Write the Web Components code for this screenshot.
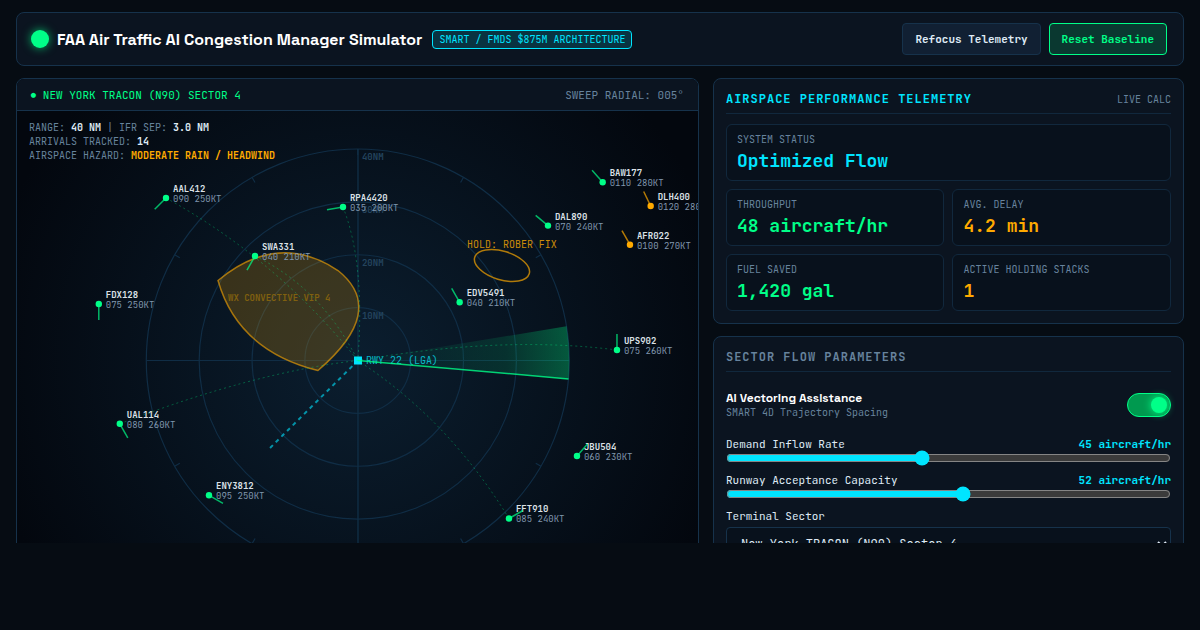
<!DOCTYPE html>
<html lang="en">
<head>
<meta charset="utf-8">
<meta name="viewport" content="width=device-width, initial-scale=1">
<title>FAA Air Traffic AI Congestion Manager Simulator</title>
<style>
  :root {
    --mono: "JetBrains Mono", "Liberation Mono", monospace;
    --sans: "Space Grotesk", Inter, sans-serif;
    --bg: #060c13;
    --panel: #0b1420;
    --inset: #08111c;
    --line: #16324b;
    --line-soft: #11283d;
    --text: #dfeaf5;
    --muted: #67839d;
    --green: #00ff88;
    --cyan: #00e5ff;
    --amber: #ffaa00;
  }
  body { margin: 0; background: var(--bg); color: var(--text); font-family: var(--mono); font-size: 11px; color-scheme: dark; }
</style>
</head>
<body>
<atc-app>
  <atc-header slot="header" heading="FAA Air Traffic AI Congestion Manager Simulator">
    <span slot="badge">SMART / FMDS $875M ARCHITECTURE</span>
    <atc-button slot="actions">Refocus Telemetry</atc-button>
    <atc-button slot="actions" tone="go">Reset Baseline</atc-button>
  </atc-header>
  <atc-scope slot="scope">
    <span slot="mark">●</span>
    <span slot="sector">NEW YORK TRACON (N90) SECTOR 4</span>
    <span slot="radial">SWEEP RADIAL: 005°</span>
  </atc-scope>
  <atc-panel slot="side" heading="AIRSPACE PERFORMANCE TELEMETRY" tone="cyan">
    <span slot="note">LIVE CALC</span>
    <atc-stats>
      <atc-stat label="SYSTEM STATUS" tone="cyan" wide>Optimized Flow</atc-stat>
      <atc-stat label="THROUGHPUT" tone="green">48 aircraft/hr</atc-stat>
      <atc-stat label="AVG. DELAY" tone="amber">4.2 min</atc-stat>
      <atc-stat label="FUEL SAVED" tone="green">1,420 gal</atc-stat>
      <atc-stat label="ACTIVE HOLDING STACKS" tone="amber">1</atc-stat>
    </atc-stats>
  </atc-panel>
  <atc-panel slot="side" heading="SECTOR FLOW PARAMETERS">
    <atc-toggle label="AI Vectoring Assistance" hint="SMART 4D Trajectory Spacing"></atc-toggle>
    <atc-slider label="Demand Inflow Rate" min="10" max="90" value="45" unit="aircraft/hr"></atc-slider>
    <atc-slider label="Runway Acceptance Capacity" min="20" max="80" value="52" unit="aircraft/hr"></atc-slider>
    <atc-select label="Terminal Sector" options="New York TRACON (N90) Sector 4"></atc-select>
  </atc-panel>
</atc-app>

<script>
const define = (name, render, setup) => customElements.define(name, class extends HTMLElement {
  connectedCallback() {
    if (this.shadowRoot) return;
    const root = this.attachShadow({ mode: "open" });
    root.innerHTML = "<style>*{box-sizing:border-box}:host{display:block;box-sizing:border-box}</style>" + render(this);
    if (setup) setup(this, root);
  }
});
const attr = (el, name) => el.getAttribute(name) || "";

define("atc-app", () => `
  <style>
    :host { display: flex; flex-direction: column; height: 100vh; }
    .view { flex: 1; min-height: 0; overflow: hidden; padding: 12px 16px 0; display: flex; flex-direction: column; gap: 12px; }
    .foot { flex: none; height: 87px; }
    main { display: grid; grid-template-columns: minmax(0, 1.45fr) minmax(0, 1fr); gap: 14px; align-items: start; }
    aside { display: flex; flex-direction: column; gap: 12px; }
  </style>
  <div class="view">
    <slot name="header"></slot>
    <main><slot name="scope"></slot><aside><slot name="side"></slot></aside></main>
  </div>
  <div class="foot"></div>`);

define("atc-header", el => `
  <style>
    :host { flex: none; }
    header { display: flex; align-items: center; justify-content: space-between; height: 54px; padding: 0 16px 0 14px; background: var(--panel); border: 1px solid var(--line); border-radius: 8px; }
    .brand, .actions { display: flex; align-items: center; gap: 8px; }
    .lamp { width: 18px; height: 18px; border-radius: 50%; background: var(--green); background-clip: content-box; }
    .lamp { box-shadow: 0 0 10px rgba(0,255,136,.7); }
    h1 { margin: 0; padding-top: 2px; font: 600 16px/20px var(--sans); color: #fff; white-space: nowrap; }
    .badge { margin-left: 2px; padding: 2px 6px; border: 1px solid var(--cyan); border-radius: 4px; background: rgba(0,229,255,.15); color: var(--cyan); font-size: 10px; line-height: 13px; white-space: nowrap; }
  </style>
  <header>
    <div class="brand"><span class="lamp"></span><h1>${attr(el, "heading")}</h1><span class="badge"><slot name="badge"></slot></span></div>
    <div class="actions"><slot name="actions"></slot></div>
  </header>`);

define("atc-button", () => `
  <style>
    button { display: block; height: 32px; padding: 0 12px; border: 1px solid var(--line); border-radius: 4px; background: #112033; color: var(--text); font: 600 11px/14px var(--mono); cursor: pointer; }
    :host([tone="go"]) button { border-color: var(--green); background: #0a3830; color: var(--green); }
  </style>
  <button type="button"><slot></slot></button>`);

define("atc-panel", el => `
  <style>
    :host { background: var(--panel); border: 1px solid var(--line); border-radius: 8px; padding: 12px; }
    .head { display: flex; align-items: center; justify-content: space-between; height: 23px; padding-bottom: 6px; border-bottom: 1px solid var(--line-soft); margin-bottom: 10px; color: var(--muted); font-size: 10px; }
    h2 { margin: 0; font: 600 12px/16px var(--mono); letter-spacing: 1px; color: var(--muted); }
    :host([tone="cyan"]) h2 { color: var(--cyan); }
  </style>
  <div class="head"><h2>${attr(el, "heading")}</h2><slot name="note"></slot></div>
  <slot></slot>`);

define("atc-stats", () => `
  <style>:host { display: grid; grid-template-columns: 1fr 1fr; gap: 8px; }</style><slot></slot>`);

define("atc-stat", el => `
  <style>
    :host { height: 57px; padding: 8px 10px; background: var(--inset); border: 1px solid var(--line-soft); border-radius: 6px; }
    :host([wide]) { grid-column: 1 / -1; }
    .label { font-size: 10px; line-height: 13px; color: var(--muted); }
    .value { margin-top: 3px; font-size: 18px; font-weight: 700; line-height: 24px; white-space: nowrap; color: var(--${attr(el, "tone")}); }
  </style>
  <div class="label">${attr(el, "label")}</div><div class="value"><slot></slot></div>`);

define("atc-toggle", el => `
  <style>
    :host { margin-top: 10px; }
    label { display: flex; align-items: center; justify-content: space-between; height: 46px; margin-bottom: 9px; }
    .title { font: 700 12px/14px var(--sans); color: #fff; }
    .hint { padding-top: 1px; font-size: 10px; line-height: 14px; color: var(--muted); }
    input { appearance: none; margin: 0; width: 44px; height: 24px; padding: 3px; border: 1px solid #1d3b57; border-radius: 12px; background: #112033; display: flex; cursor: pointer; }
    input::before { content: ""; width: 16px; height: 16px; border-radius: 50%; background: var(--muted); }
    input:checked { justify-content: flex-end; border-color: var(--green); background: #00994f; }
    input:checked::before { background: var(--green); box-shadow: 0 0 8px var(--green); }
  </style>
  <label><span><div class="title">${attr(el, "label")}</div><div class="hint">${attr(el, "hint")}</div></span><input type="checkbox" role="switch" checked></label>`);

define("atc-slider", el => `
  <style>
    :host { height: 36px; }
    .row { display: flex; justify-content: space-between; height: 13px; line-height: 14px; font-size: 11px; }
    output { color: var(--cyan); font-weight: 700; }
    input { display: block; width: 100%; height: 16px; margin: 0; accent-color: var(--cyan); color-scheme: dark; }
  </style>
  <div class="row"><label for="range">${attr(el, "label")}</label><output for="range"></output></div>
  <input id="range" type="range" min="${attr(el, "min")}" max="${attr(el, "max")}" value="${attr(el, "value")}">`,
  (el, root) => {
    const input = root.querySelector("input"), out = root.querySelector("output");
    const sync = () => { out.textContent = input.value + " " + attr(el, "unit"); };
    input.addEventListener("input", sync);
    sync();
  });

define("atc-select", el => `
  <style>
    label { display: block; line-height: 14px; font-size: 11px; margin-bottom: 4px; }
    select { display: block; width: 100%; height: 34px; padding: 0 10px; border: 1px solid var(--line); border-radius: 4px; background-color: var(--inset); color: var(--text); font: 12px/16px var(--mono); color-scheme: dark; }
  </style>
  <label for="pick">${attr(el, "label")}</label>
  <select id="pick">${attr(el, "options").split("|").map(o => `<option>${o}</option>`).join("")}</select>`);

/* Radar scope: one drawing centred on the airport, ranges out to 40 NM */
const CX = 357.8, CY = 360.5, R = 211.5;
const TRACKS = [
  ["AAL412", "090 250KT", 166, 198, -11.3, 11.3, 1],
  ["RPA4420", "035 200KT", 343, 207, -16, 2.8, 1],
  ["SWA331", "040 210KT", 255, 256, -8, 14, 1],
  ["FDX128", "075 250KT", 98.8, 304, 0, 16],
  ["UAL114", "080 260KT", 119.8, 423.8, 8, 14, 1],
  ["ENY3812", "095 250KT", 209, 495.3, 14, 8],
  ["FFT910", "085 240KT", 509, 518.5, 14, -8, 1],
  ["JBU504", "060 230KT", 577, 456, 10.5, -12],
  ["UPS902", "075 260KT", 617, 350, 0, -16, 1],
  ["EDV5491", "040 210KT", 459.7, 302.3, -8, -14],
  ["DAL890", "070 240KT", 548, 225.6, -12.3, -10.3],
  ["AFR022", "0100 270KT", 630, 244.7, -8, -14, 0, "hold"],
  ["DLH400", "0120 280KT", 650.7, 206, -7, -14.5, 0, "hold"],
  ["BAW177", "0110 280KT", 602.7, 182.2, -10.6, -12]
];
const polar = (deg, r) => [CX + r * Math.cos(deg * Math.PI / 180), CY + r * Math.sin(deg * Math.PI / 180)].map(n => n.toFixed(1));
const rings = [1, 2, 3, 4].map(i => `<circle cx="${CX}" cy="${CY}" r="${R * i / 4}"/>`).join("");
const ringText = [1, 2, 3, 4].map(i => `<text x="362" y="${371.5 - 53 * i}">${i * 10}NM</text>`).join("");
const ticks = Array.from({ length: 12 }, (_, i) => `M${polar(i * 30, R)}L${polar(i * 30, R - 6)}`).join("");
const routes = TRACKS.filter(t => t[6]).map(([, , x, y]) => `M${x},${y}Q${(x + CX) / 2 + 15},${(y + CY) / 2 - 20} ${CX},${CY}`).join("");
const planes = TRACKS.map(([id, data, x, y, dx, dy, , kind]) => `
  <g class="${kind || "free"}"><text class="id" x="${x + 7}" y="${y - 6}">${id}</text><text class="data" x="${x + 7}" y="${y + 4}">${data}</text>
  <path d="M${x},${y}l${dx},${dy}"/><circle cx="${x}" cy="${y}" r="3.2"/></g>`).join("");

define("atc-scope", () => `
  <style>
    :host { background: #03070e; border: 1px solid var(--line); border-radius: 8px; overflow: hidden; }
    .bar { display: flex; align-items: center; justify-content: space-between; height: 32px; padding: 0 14px; background: var(--panel); border-bottom: 1px solid var(--line); font-size: 11px; color: var(--muted); }
    .sector { display: flex; align-items: center; gap: 7px; color: var(--green); }
    .mark { font-size: 8px; }
    .scope { display: grid; background: radial-gradient(circle 380px at center, #0b1e2f 0%, #03070e 100%); }
    .scope > * { grid-area: 1 / 1; }
    .info { z-index: 1; justify-self: start; align-self: start; padding: 10px 12px; font-size: 10px; line-height: 14px; color: var(--muted); }
    .info b { color: var(--text); }
    .info .warn { color: var(--amber); }
    svg { display: block; width: 100%; height: 500px; font: 9px var(--mono); }
    .grid { fill: none; stroke: #102d45; stroke-width: 1.2; }
    .ringtext { fill: #24445e; font-weight: 700; }
    .wx { fill: rgba(255,170,0,.2); stroke: rgba(255,170,0,.6); stroke-width: 1.5; }
    .routes { fill: none; stroke: rgba(0,255,136,.32); stroke-dasharray: 2 3; }
    .free { fill: var(--green); stroke: var(--green); }
    .hold { fill: var(--amber); stroke: var(--amber); }
    .free path, .hold path { stroke-width: 1.5; opacity: .7; }
    .free circle, .hold circle { stroke: none; }
    .id, .data { stroke: none; }
    .id { fill: #dde2e8; font-weight: 600; }
    .data { fill: #8097ae; }
  </style>
  <div class="bar"><span class="sector"><span class="mark"><slot name="mark"></slot></span><slot name="sector"></slot></span><slot name="radial"></slot></div>
  <div class="scope">
    <div class="info">
      <div>RANGE: <b>40 NM</b> | IFR SEP: <b>3.0 NM</b></div>
      <div>ARRIVALS TRACKED: <b>14</b></div>
      <div>AIRSPACE HAZARD: <b class="warn">MODERATE RAIN / HEADWIND</b></div>
    </div>
    <svg viewBox="17 111 681 500" role="img" aria-label="Radar scope">
      <defs><radialGradient id="beam" gradientUnits="userSpaceOnUse" cx="${CX}" cy="${CY}" r="${R}">
        <stop offset="0" stop-color="#00ff88" stop-opacity="0"/><stop offset=".7" stop-color="#00ff88" stop-opacity=".12"/><stop offset="1" stop-color="#00ff88" stop-opacity=".3"/>
      </radialGradient></defs>
      <g class="grid">${rings}<path d="${ticks}M${CX - R},${CY}h${R * 2}"/><path stroke-width="2" stroke-opacity=".7" d="M358,149v423"/></g>
      <g class="ringtext">${ringText}</g>
      <path class="wx" d="M218,280.5Q278,230.5 338,270.5Q388,310.5 318,370.5Q238,350.5 218,280.5Z"/>
      <text x="228" y="301" fill="#80600f" font-weight="700">WX CONVECTIVE VIP 4</text>
      <ellipse cx="502" cy="265.5" rx="28.5" ry="14.3" transform="rotate(17 502 265.5)" fill="none" stroke="#b07a0a" stroke-width="1.5"/>
      <text x="467" y="248" fill="#cc8b08" font-size="10">HOLD: ROBER FIX</text>
      <path d="M358,360.5L270,448" stroke="#00e5ff" stroke-opacity=".6" stroke-width="2" stroke-dasharray="4 4"/>
      <rect x="354" y="356.5" width="8" height="8" fill="#00e5ff"/>
      <text x="366" y="364" fill="#08b4ca" font-size="10">RWY 22 (LGA)</text>
      <path class="routes" d="${routes}"/>
      <path fill="url(#beam)" d="M${CX},${CY}L${polar(-9.3, R)}A${R},${R} 0 0 1 ${polar(5, R)}Z"/>
      <path d="M${CX},${CY}L${polar(5, R)}" stroke="#00ff88" stroke-opacity=".8" stroke-width="1.5"/>
      ${planes}
    </svg>
  </div>`);
</script>
</body>
</html>
